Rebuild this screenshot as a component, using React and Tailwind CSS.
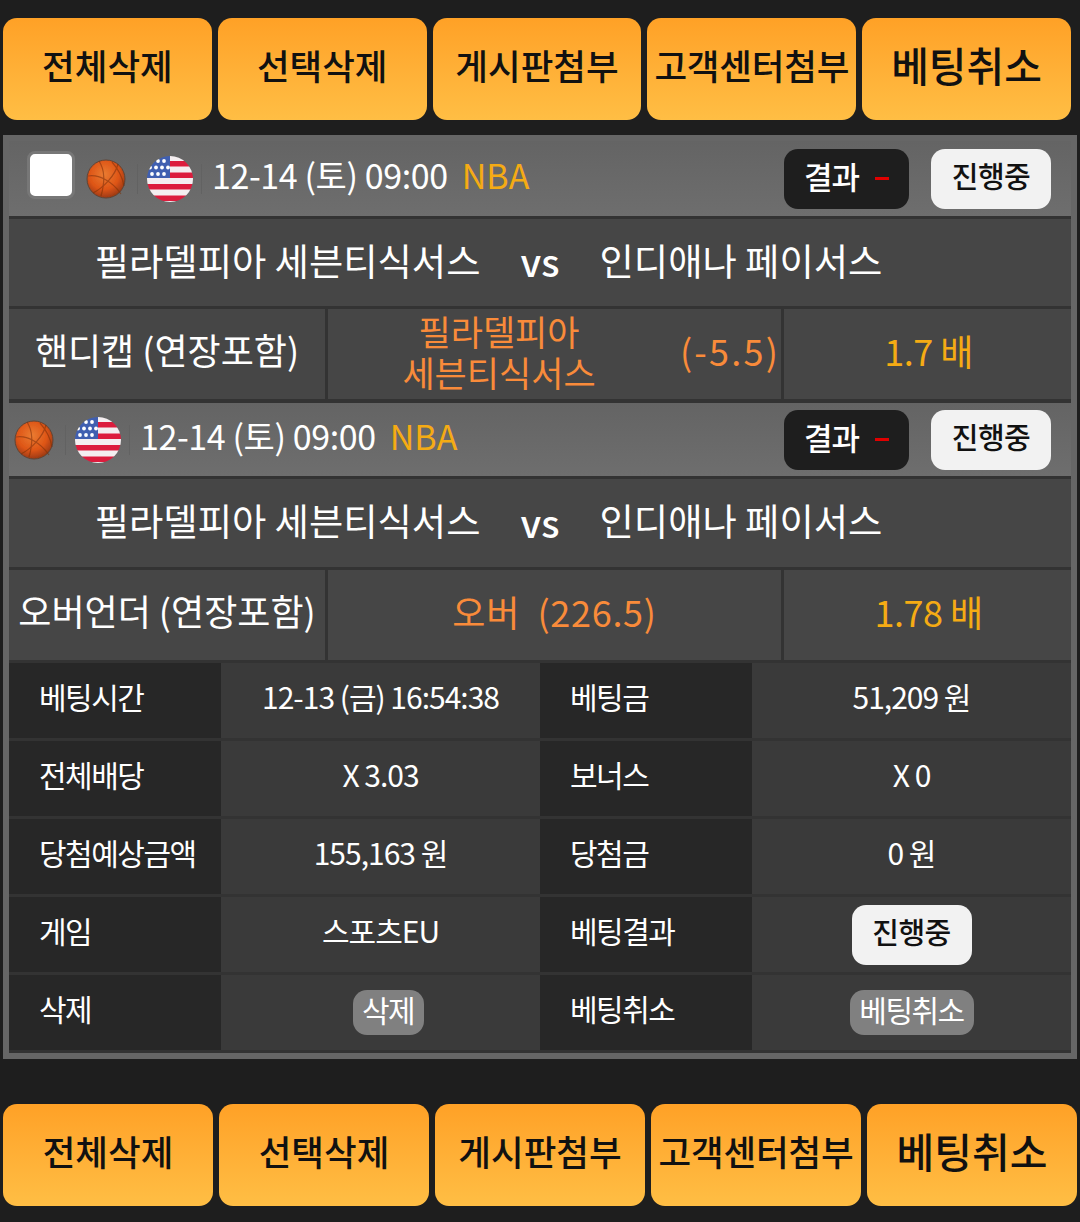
const FONT = "font-['Noto_Sans_CJK_KR','Noto_Sans_KR',sans-serif]";

function ActionButton({ label, large, wide }) {
  return (
    <button className={`flex h-[102px] items-center justify-center rounded-[14px] bg-gradient-to-b from-[#ffa126] to-[#ffbe44] pb-2 font-medium text-[#111] ${wide ? "w-[210px]" : "w-[208.8px]"} ${large ? "text-[41px]" : "text-[35.5px]"} ${label.length > 5 ? "tracking-[-0.2px]" : ""}`}>
      {label}
    </button>
  );
}

function ActionBar({ wide, className }) {
  return (
    <div className={`flex gap-[6px] pl-[3px] ${className}`}>
      {["전체삭제", "선택삭제", "게시판첨부", "고객센터첨부"].map((t) => (
        <ActionButton key={t} label={t} wide={wide} />
      ))}
      <ActionButton label="베팅취소" large wide={wide} />
    </div>
  );
}

function Ball({ id }) {
  return (
    <svg width="42" height="42" viewBox="0 0 42 42" className="shrink-0">
      <defs>
        <radialGradient id={id} cx="45%" cy="38%" r="65%">
          <stop offset="0%" stopColor="#ea7c32" />
          <stop offset="60%" stopColor="#de5516" />
          <stop offset="100%" stopColor="#943610" />
        </radialGradient>
        <filter id={`${id}s`}>
          <feGaussianBlur stdDeviation="0.7" />
        </filter>
      </defs>
      <g filter={`url(#${id}s)`}>
        <circle cx="21" cy="21" r="19" fill={`url(#${id})`} stroke="#5f4436" strokeWidth="1" />
        <g fill="none" stroke="#7b2f0c" strokeWidth="1.2" opacity="0.55">
          <path d="M8 35 C18 30 30 18 33 6" />
          <path d="M3 18 C14 16 28 24 36 36" />
          <path d="M14 3 C20 12 20 24 16 38" />
          <path d="M27 4 C34 12 38 22 39 28" />
        </g>
      </g>
    </svg>
  );
}

function Flag({ id }) {
  const stars = [];
  [[5, 11, 17], [3, 9, 15, 21], [5, 11, 17]].forEach((xs, r) => {
    xs.forEach((x) => stars.push(<circle key={`${r}-${x}`} cx={x} cy={5 + r * 6.5} r="1.9" fill="#fff" />));
  });
  return (
    <svg width="46" height="46" viewBox="0 0 46 46" className="shrink-0">
      <defs>
        <clipPath id={id}>
          <circle cx="23" cy="23" r="23" />
        </clipPath>
        <filter id={`${id}s`}>
          <feGaussianBlur stdDeviation="0.5" />
        </filter>
      </defs>
      <g clipPath={`url(#${id})`}>
        <g filter={`url(#${id}s)`}>
          <rect x="-2" y="-2" width="50" height="50" fill="#f4eef0" />
          {[5, 16.5, 28, 39.5].map((y) => (
            <rect key={y} x="-2" y={y} width="50" height="5.5" fill="#dc1f3e" />
          ))}
          <rect x="-2" y="-2" width="25" height="24" fill="#3f5fb0" />
          {stars}
        </g>
      </g>
    </svg>
  );
}

function StatusPill({ className = "" }) {
  return (
    <span className={`flex h-[60px] w-[120px] items-center justify-center rounded-[14px] bg-[#f2f2f2] pb-[6px] text-[29px] font-medium tracking-[-0.5px] text-[#111] ${className}`}>
      진행중
    </span>
  );
}

function GameHeader({ first, id }) {
  return (
    <div className={`flex items-center bg-gradient-to-b from-[#646464] to-[#6e6e6e] pr-5 ${first ? "h-[75px] pl-[18px]" : "h-[73px] pl-[4px]"}`}>
      {first && (
        <span className="mb-[8px] mr-[10px] flex h-[48px] w-[48px] shrink-0 items-center justify-center rounded-[8px] border-[3px] border-[#777] bg-white" />
      )}
      <Ball id={`b${id}`} />
      <span className="ml-[10px] flex h-[30px] w-[65px] shrink-0 items-center justify-center border-x border-[#626262]">
        <Flag id={`f${id}`} />
      </span>
      <span className="ml-[10px] whitespace-nowrap pb-2 text-[34px] tracking-[-0.4px] text-white">12-14 (토) 09:00</span>
      <span className="ml-[14px] pb-2 text-[34px] text-[#f5ab14]">NBA</span>
      <span className="ml-auto flex h-[60px] w-[125px] items-center justify-center gap-4 rounded-[14px] bg-[#1e1e1e] pb-1 text-[31px] font-medium tracking-[-1px] text-white">
        결과
        <span className="mt-1 h-[3px] w-[14px] bg-[#e00000]" />
      </span>
      <StatusPill className="ml-[22px]" />
    </div>
  );
}

function TeamsRow({ h }) {
  return (
    <div className={`flex ${h} items-center bg-[#464646] text-[37.3px] text-white`}>
      <span className="flex-1 pb-1 text-right">필라델피아 세븐티식서스</span>
      <span className="w-[119px] pb-1 text-center text-[38px] font-medium">vs</span>
      <span className="flex-1 pb-1">인디애나 페이서스</span>
    </div>
  );
}

function BetRow({ h, label, middle, odds }) {
  return (
    <div className={`flex ${h} gap-[3px]`}>
      <div className="flex w-[316px] items-center justify-center whitespace-nowrap bg-[#464646] pb-[10px] text-[36px] text-white">{label}</div>
      <div className="flex w-[453px] items-center bg-[#464646] text-[#f98b3a]">{middle}</div>
      <div className="flex flex-1 items-center justify-center bg-[#464646] pb-[9px] pl-[2px] text-[36px] tracking-[-0.5px] text-[#f5ab14]">{odds}</div>
    </div>
  );
}

function Cell({ children }) {
  return (
    <div className="flex items-center justify-center bg-[#3a3a3a] pb-2 text-[30px] tracking-[-1px] text-white">{children}</div>
  );
}

function Label({ children }) {
  return (
    <div className="flex items-center bg-[#272727] pb-2 pl-[30px] text-[30px] tracking-[-1.5px] text-white">{children}</div>
  );
}

function SmallPill({ children, className }) {
  return (
    <span className={`-mb-2 flex h-[45px] items-center justify-center rounded-[14px] bg-[#808080] pb-[6px] text-[30px] tracking-[-1.5px] text-white ${className}`}>{children}</span>
  );
}

const rows = [
  ["베팅시간", "12-13 (금) 16:54:38", "베팅금", "51,209 원"],
  ["전체배당", "X 3.03", "보너스", "X 0"],
  ["당첨예상금액", "155,163 원", "당첨금", "0 원"],
  ["게임", "스포츠EU", "베팅결과", <StatusPill key="s" className="-mb-2" />],
  ["삭제", <SmallPill key="d" className="ml-[15px] w-[71px]">삭제</SmallPill>, "베팅취소", <SmallPill key="c" className="w-[124px]">베팅취소</SmallPill>],
];

export default function App() {
  return (
    <div className={`${FONT} h-[1222px] w-[1080px] overflow-hidden bg-[#1e1e1e]`}>
      <ActionBar className="pt-[18px]" />
      <div className="mx-[3px] mt-[15px] border-[6px] border-[#666] bg-[#333]">
        <div className="flex flex-col gap-[3px] pb-[3px]">
          <GameHeader first id="1" />
          <TeamsRow h="h-[87px]" />
          <BetRow
            h="h-[90px]"
            label="핸디캡 (연장포함)"
            middle={
              <>
                <span className="w-[342px] shrink-0 pb-[7px] text-center text-[35px] leading-[41px]">필라델피아<br />세븐티식서스</span>
                <span className="ml-[10px] pb-[9px] text-[36px] tracking-[2.2px]">(-5.5)</span>
              </>
            }
            odds="1.7 배"
          />
          <div className="mt-px">
            <GameHeader id="2" />
          </div>
          <TeamsRow h="h-[88px]" />
          <BetRow
            h="h-[90px]"
            label="오버언더 (연장포함)"
            middle={<span className="w-full whitespace-pre pb-2 text-center text-[36px] tracking-[0.7px]">오버  (226.5)</span>}
            odds="1.78 배"
          />
          {rows.map((r, i) => (
            <div key={i} className="grid h-[75px] grid-cols-[212px_319px_212px_1fr]">
              <Label>{r[0]}</Label>
              <Cell>{r[1]}</Cell>
              <Label>{r[2]}</Label>
              <Cell>{r[3]}</Cell>
            </div>
          ))}
        </div>
      </div>
      <ActionBar wide className="pt-[45px]" />
    </div>
  );
}
